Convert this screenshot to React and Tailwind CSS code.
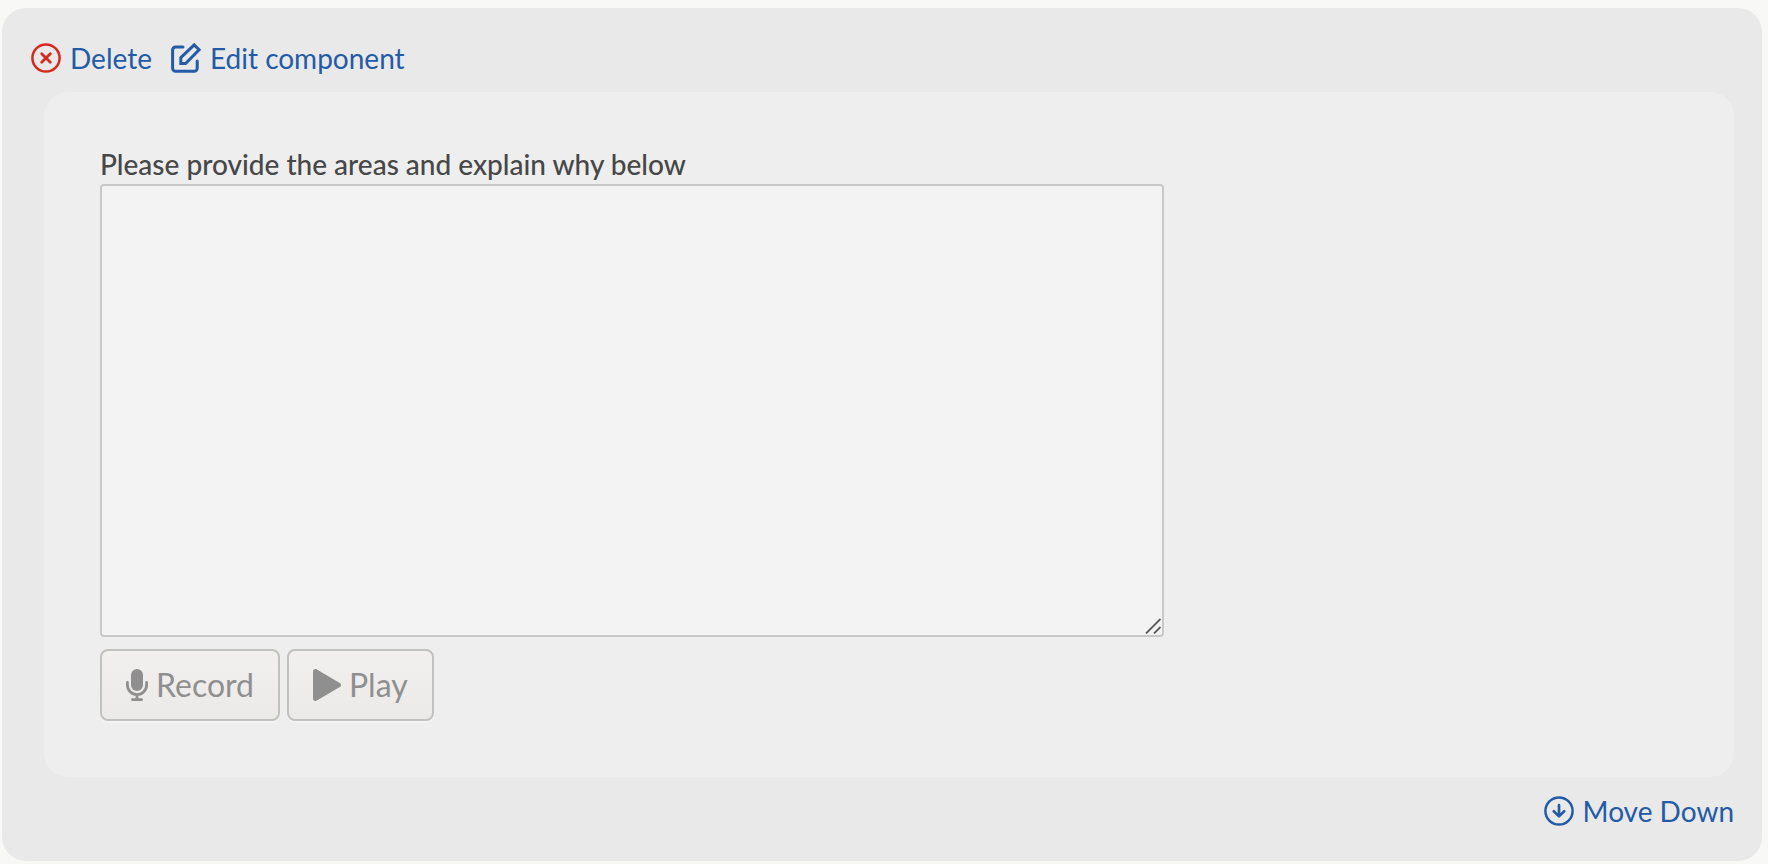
import React, { useState } from 'react'

const DeleteIcon = () => (
    <svg className="size-8 shrink-0 text-[#d52b1e]" viewBox="0 0 32 32" fill="none" stroke="currentColor" strokeLinecap="round" aria-hidden="true">
        <circle cx="16" cy="16" r="13.6" strokeWidth="2.5" />
        <path d="M11.7 11.7l8.6 8.6M20.3 11.7l-8.6 8.6" strokeWidth="2.8" />
    </svg>
);

const EditIcon = () => (
    <svg className="size-8 shrink-0" viewBox="0 0 32 32" fill="none" stroke="currentColor" strokeWidth="3" aria-hidden="true">
        <path d="M13 5H5.6A3 3 0 0 0 2.6 8V26.2a3 3 0 0 0 3 3H24.2a3 3 0 0 0 3-3V19" strokeLinecap="round" />
        <path d="M10.8 21.5v-5.8L24.2 2.9l4.9 4.9L15.6 21.5z" />
    </svg>
);

const MoveDownIcon = () => (
    <svg className="size-8 shrink-0" viewBox="0 0 32 32" fill="none" stroke="currentColor" strokeLinecap="round" strokeLinejoin="round" aria-hidden="true">
        <circle cx="16" cy="16" r="13.6" strokeWidth="2.5" />
        <path d="M16 10.2v11M10.8 16.3l5.2 5.1 5.2-5.1" strokeWidth="2.7" />
    </svg>
);

const MicIcon = () => (
    <svg className="h-8 w-6 shrink-0" viewBox="0 0 24 32" fill="none" stroke="currentColor" strokeLinecap="round" aria-hidden="true">
        <rect x="5" y="0" width="12" height="22" rx="6" fill="currentColor" stroke="none" />
        <path d="M1.4 13.5V16a9.6 9.6 0 0 0 19.2 0v-2.5M11 26v4M6.4 30.6h9.2" strokeWidth="2.8" />
    </svg>
);

const PlayIcon = () => (
    <svg className="h-8 w-[30px] shrink-0" viewBox="0 0 30 32" fill="currentColor" aria-hidden="true">
        <path d="M0 2.6C0 .5 2 -.6 3.9.5L26.8 13.9c1.7 1 1.7 3.2 0 4.2L3.9 31.5C2 32.6 0 31.5 0 29.4z" />
    </svg>
);

const ToolLink = ({ icon, children }) => (
    <a href="#" className="flex items-center gap-2 text-[28px] leading-9 text-[#245ba7]">
        {icon}
        <span>{children}</span>
    </a>
);

const AudioButton = ({ icon, children }) => (
    <button
        type="button"
        disabled
        className="flex h-[72px] items-center gap-1.5 rounded-lg border-2 border-[#c1c1be] bg-linear-to-b from-[#f1f0ee] to-[#ebeae8] px-6 text-[32px] text-[#8f8f8f] shadow-[0_2px_0_#f3f3f3]"
    >
        {icon}
        <span>{children}</span>
    </button>
);

const App = () => {
    const [answer, setAnswer] = useState('');

    return (
        <div className="min-h-screen bg-[#f8f8f6] pt-2 pr-1.5 pb-1 pl-0.5 font-['Lato',sans-serif]">
            <section className="rounded-3xl bg-[#e9e9e9] pt-8 pr-7 pb-8 pl-7">
                <div className="flex items-center gap-[18px]">
                    <ToolLink icon={<DeleteIcon />}>Delete</ToolLink>
                    <ToolLink icon={<EditIcon />}>Edit component</ToolLink>
                </div>

                <div className="mt-4 ml-3.5 rounded-3xl bg-[#eeeeee] p-14">
                    <label htmlFor="answer" className="block pb-1 text-[28px] leading-8 font-medium text-[#474747]">
                        Please provide the areas and explain why below
                    </label>

                    <div className="relative w-full max-w-[1064px]">
                        <textarea
                            id="answer"
                            value={answer}
                            onChange={(e) => setAnswer(e.target.value)}
                            className="block h-[453px] w-full resize-none rounded-sm border-2 border-[#c8c8c8] bg-[#f3f3f3] px-3 py-2 text-[28px] outline-none"
                        />
                        <svg className="pointer-events-none absolute right-[3px] bottom-[3px] size-4 text-[#5c5c5c]" viewBox="0 0 16 16" stroke="currentColor" strokeWidth="1.8" aria-hidden="true">
                            <path d="M1 15.5l14.5-14.5M9 15.5l6.5-6.5" />
                        </svg>
                    </div>

                    <div className="mt-3 flex gap-[7px]">
                        <AudioButton icon={<MicIcon />}>Record</AudioButton>
                        <AudioButton icon={<PlayIcon />}>Play</AudioButton>
                    </div>
                </div>

                <div className="mt-4 flex justify-end">
                    <ToolLink icon={<MoveDownIcon />}>Move Down</ToolLink>
                </div>
            </section>
        </div>
    )
}
export default App
